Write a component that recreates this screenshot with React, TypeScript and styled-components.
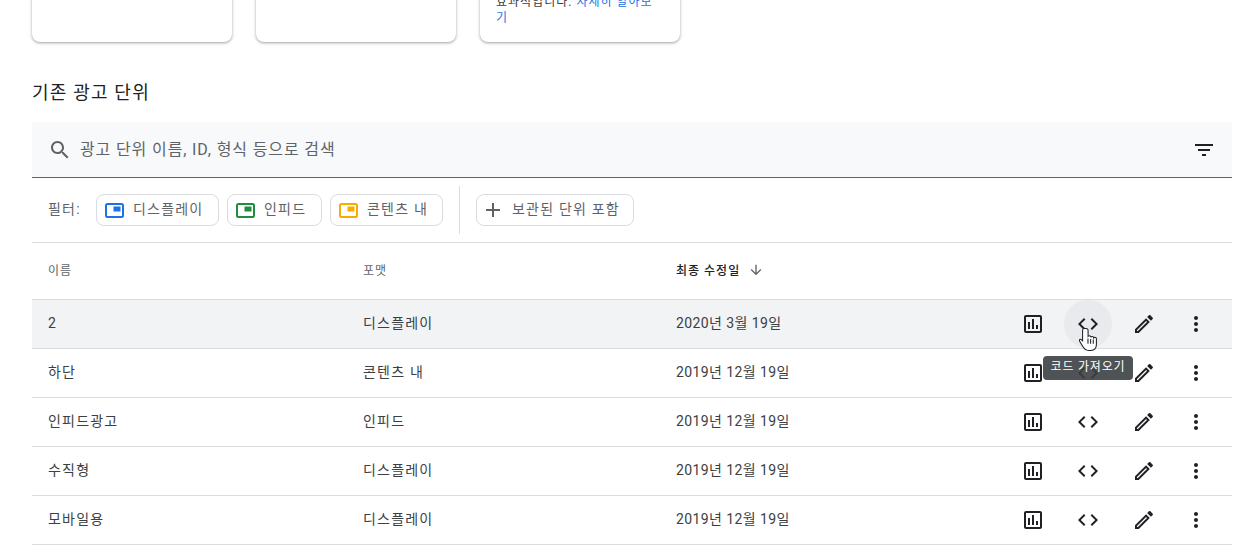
import React, { FC } from 'react'
import styled, { createGlobalStyle } from 'styled-components'

const GlobalStyle = createGlobalStyle`
	html, body {
		margin: 0;
		padding: 0;
		height: 100%;
		overflow: hidden;
		background: #fff;
		font-family: Roboto, "Noto Sans CJK KR", sans-serif;
		color: #3c4043;
	}
`

const paths = {
	chart: 'M9 17H7v-7h2v7zm4 0h-2V7h2v10zm4 0h-2v-4h2v4zm2 2H5V5h14v14zm0-16H5c-1.1 0-2 .9-2 2v14c0 1.1.9 2 2 2h14c1.1 0 2-.9 2-2V5c0-1.1-.9-2-2-2z',
	code: 'M9.4 16.6L4.8 12l4.6-4.6L8 6l-6 6 6 6 1.4-1.4zm5.2 0l4.6-4.6-4.6-4.6L16 6l6 6-6 6-1.4-1.4z',
	edit: 'M14.06 9.02l.92.92L5.92 19H5v-.92l9.06-9.06M17.66 3c-.25 0-.51.1-.7.29l-1.83 1.83 3.75 3.75 1.83-1.83c.39-.39.39-1.02 0-1.41l-2.34-2.34c-.2-.2-.45-.29-.71-.29zm-3.6 3.19L3 17.25V21h3.75L17.81 9.94l-3.75-3.75z',
	more: 'M12 8c1.1 0 2-.9 2-2s-.9-2-2-2-2 .9-2 2 .9 2 2 2zm0 2c-1.1 0-2 .9-2 2s.9 2 2 2 2-.9 2-2-.9-2-2-2zm0 6c-1.1 0-2 .9-2 2s.9 2 2 2 2-.9 2-2-.9-2-2-2z',
	search: 'M15.5 14h-.79l-.28-.27C15.41 12.59 16 11.11 16 9.5 16 5.91 13.09 3 9.5 3S3 5.91 3 9.5 5.91 16 9.5 16c1.61 0 3.09-.59 4.23-1.57l.27.28v.79l5 4.99L20.49 19l-4.99-5zm-6 0C7.01 14 5 11.99 5 9.5S7.01 5 9.5 5 14 7.01 14 9.5 11.99 14 9.5 14z',
	filter: 'M10 18h4v-2h-4v2zM3 6v2h18V6H3zm3 7h12v-2H6v2z',
	add: 'M19 13h-6v6h-2v-6H5v-2h6V5h2v6h6v2z',
	down: 'M20 12l-1.41-1.41L13 16.17V4h-2v12.17l-5.58-5.59L4 12l8 8 8-8z',
}

type IconProps = { name: keyof typeof paths; size?: number; color?: string }

const Icon: FC<IconProps> = ({ name, size = 24, color = '#202124' }) => (
	<svg width={size} height={size} viewBox='0 0 24 24' fill={color} style={{ display: 'block' }}>
		<path d={paths[name]} />
	</svg>
)

const ChipIcon: FC<{ color: string }> = ({ color }) => (
	<svg width='19' height='15' viewBox='0 0 19 15' style={{ display: 'block' }}>
		<rect x='1' y='1' width='17' height='13' rx='1.5' fill='none' stroke={color} strokeWidth='2' />
		<rect x='8.5' y='3.5' width='7' height='5' fill={color} />
	</svg>
)

const HandCursor: FC = () => (
	<svg width='19' height='25' viewBox='0 0 18 24' preserveAspectRatio='none'>
		<path
			d='M5 1.5c-.9 0-1.6.7-1.6 1.6v10.2l-1-1c-.8-.7-1.9-.6-2 .4 0 .5.2.9.5 1.4l3 5.2c1 1.7 2.5 3.2 5.2 3.2h1.9c3.5 0 5.5-2.3 5.5-5.6v-5.6c0-.9-.6-1.4-1.4-1.4-.5 0-.9.2-1.2.6 0-.9-.7-1.4-1.4-1.4-.5 0-1 .2-1.2.7-.1-.9-.7-1.4-1.5-1.4-.5 0-.9.2-1.2.5V3.1c0-.9-.7-1.6-1.6-1.6z'
			fill='#fff'
			stroke='#202124'
			strokeWidth='1'
		/>
		<path d='M8.5 11v5M11 11.5V16M13.5 12v4' stroke='#202124' strokeWidth='1' fill='none' />
	</svg>
)

const rows = [
	{ name: '2', format: '디스플레이', date: '2020년 3월 19일', active: true },
	{ name: '하단', format: '콘텐츠 내', date: '2019년 12월 19일' },
	{ name: '인피드광고', format: '인피드', date: '2019년 12월 19일' },
	{ name: '수직형', format: '디스플레이', date: '2019년 12월 19일' },
	{ name: '모바일용', format: '디스플레이', date: '2019년 12월 19일' },
]

const App: FC = () => (
	<Page>
		<GlobalStyle />
		<Cards>
			<Card />
			<Card />
			<Card>
				<CardText>
					효과적입니다. <CardLink>자세히 알아보기</CardLink>
				</CardText>
			</Card>
		</Cards>
		<Title>기존 광고 단위</Title>
		<SearchBar>
			<Icon name='search' color='#5f6368' />
			<SearchText>광고 단위 이름, ID, 형식 등으로 검색</SearchText>
			<FilterButton>
				<Icon name='filter' />
			</FilterButton>
		</SearchBar>
		<FilterRow>
			<FilterLabel>필터:</FilterLabel>
			<Chip $width={123}>
				<ChipIcon color='#1a73e8' />
				<ChipLabel>디스플레이</ChipLabel>
			</Chip>
			<Chip $width={95}>
				<ChipIcon color='#1e8e3e' />
				<ChipLabel>인피드</ChipLabel>
			</Chip>
			<Chip $width={113}>
				<ChipIcon color='#f9ab00' />
				<ChipLabel>콘텐츠 내</ChipLabel>
			</Chip>
			<Divider />
			<Chip $width={158} $pad={4}>
				<Icon name='add' size={24} color='#5f6368' />
				<ChipLabel>보관된 단위 포함</ChipLabel>
			</Chip>
		</FilterRow>
		<HeadRow>
			<HeadCell>이름</HeadCell>
			<HeadCell>포맷</HeadCell>
			<SortCell>
				최종 수정일
				<Icon name='down' size={16} color='#5f6368' />
			</SortCell>
		</HeadRow>
		{rows.map(row => (
			<Row key={row.name} $active={row.active}>
				<Cell>{row.name}</Cell>
				<Cell>{row.format}</Cell>
				<DateCell>{row.date}</DateCell>
				<Actions>
					<ActionButton>
						<Icon name='chart' />
					</ActionButton>
					<ActionButton $hover={row.active}>
						<Icon name='code' />
						{row.active && (
							<>
								<Cursor>
									<HandCursor />
								</Cursor>
								<Tooltip>코드 가져오기</Tooltip>
							</>
						)}
					</ActionButton>
					<ActionButton>
						<Icon name='edit' />
					</ActionButton>
					<ActionButton>
						<Icon name='more' />
					</ActionButton>
				</Actions>
			</Row>
		))}
	</Page>
)

export default App

const Page = styled.div`
	box-sizing: border-box;
	width: 1257px;
	height: 556px;
	padding: 0 25px 0 32px;
	overflow: hidden;
	background: #fff;
`
const Cards = styled.div`
	display: flex;
	gap: 24px;
	margin-top: -58px;
`
const Card = styled.div`
	box-sizing: border-box;
	display: flex;
	flex-direction: column;
	justify-content: flex-end;
	width: 200px;
	height: 100px;
	padding: 0 16px 16px;
	border-radius: 8px;
	background: #fff;
	box-shadow: 0 1px 2px rgba(60, 64, 67, 0.3), 0 1px 3px 1px rgba(60, 64, 67, 0.15);
`
const CardText = styled.div`
	font-size: 12px;
	line-height: 16px;
	letter-spacing: 1px;
	color: #3c4043;
	word-break: break-all;
`
const CardLink = styled.span`
	color: #1a73e8;
`
const Title = styled.h2`
	margin: 37px 0 15px;
	height: 28px;
	font-size: 18px;
	font-weight: 400;
	line-height: 28px;
	letter-spacing: 1.2px;
	color: #202124;
`
const SearchBar = styled.div`
	box-sizing: border-box;
	display: flex;
	align-items: center;
	height: 56px;
	padding: 0 16px;
	background: #f8f9fa;
	border-bottom: 1px solid #5f6368;
`
const SearchText = styled.span`
	margin-left: 8px;
	font-size: 16px;
	line-height: 20px;
	letter-spacing: 0.87px;
	color: #5f6368;
`
const FilterButton = styled.div`
	margin-left: auto;
`
const FilterRow = styled.div`
	box-sizing: border-box;
	display: flex;
	align-items: center;
	gap: 8px;
	height: 65px;
	padding: 0 16px;
	border-bottom: 1px solid #dadce0;
`
const FilterLabel = styled.span`
	width: 40px;
	padding-bottom: 4px;
	font-size: 14px;
	letter-spacing: 1.2px;
	color: #5f6368;
`
const Chip = styled.div<{ $width: number; $pad?: number }>`
	box-sizing: border-box;
	display: flex;
	align-items: center;
	gap: ${props => (props.$pad ? 7 : 9)}px;
	width: ${props => props.$width}px;
	height: 32px;
	padding: 0 0 0 ${props => props.$pad ?? 8}px;
	border: 1px solid #dadce0;
	border-radius: 8px;
	color: #5f6368;
	white-space: nowrap;
`
const ChipLabel = styled.span`
	padding-bottom: 4px;
	font-size: 14px;
	letter-spacing: 1.2px;
`
const Divider = styled.div`
	width: 1px;
	height: 48px;
	margin: 0 8px;
	background: #dadce0;
`
const columns = `
	display: grid;
	grid-template-columns: 315px 313px 1fr auto;
	align-items: center;
	box-sizing: border-box;
	padding-left: 16px;
	border-bottom: 1px solid #dadce0;
`
const HeadRow = styled.div`
	${columns}
	height: 57px;
`
const HeadCell = styled.div`
	padding-bottom: 3px;
	font-size: 12px;
	letter-spacing: 1px;
	color: #5f6368;
`
const SortCell = styled.div`
	display: flex;
	align-items: center;
	gap: 8px;
	padding-bottom: 3px;
	font-size: 12px;
	font-weight: 500;
	letter-spacing: 1px;
	color: #202124;
`
const Row = styled.div<{ $active?: boolean }>`
	${columns}
	height: 49px;
	background: ${props => (props.$active ? '#f1f3f4' : '#fff')};
`
const Cell = styled.div`
	padding-bottom: 3px;
	font-size: 14px;
	line-height: 20px;
	letter-spacing: 1.2px;
	color: #3c4043;
`
const DateCell = styled(Cell)`
	letter-spacing: 0.4px;
`
const Actions = styled.div`
	display: grid;
	grid-template-columns: 55px 56px 56px 48px;
	padding-right: 12px;
`
const ActionButton = styled.div<{ $hover?: boolean }>`
	position: relative;
	display: flex;
	align-items: center;
	justify-content: center;
	height: 48px;
	&::before {
		content: '';
		display: ${props => (props.$hover ? 'block' : 'none')};
		position: absolute;
		left: 4px;
		top: 0;
		width: 48px;
		height: 48px;
		border-radius: 50%;
		background: #e8eaed;
	}
	svg {
		position: relative;
	}
`
const Cursor = styled.div`
	position: absolute;
	left: 19px;
	top: 27px;
	z-index: 3;
`
const Tooltip = styled.div`
	position: absolute;
	left: -17px;
	top: 56px;
	z-index: 2;
	box-sizing: border-box;
	width: 90px;
	height: 24px;
	border-radius: 4px;
	background: rgba(60, 64, 67, 0.9);
	color: #fff;
	font-size: 12px;
	line-height: 22px;
	letter-spacing: 0.8px;
	text-align: center;
	white-space: nowrap;
`
